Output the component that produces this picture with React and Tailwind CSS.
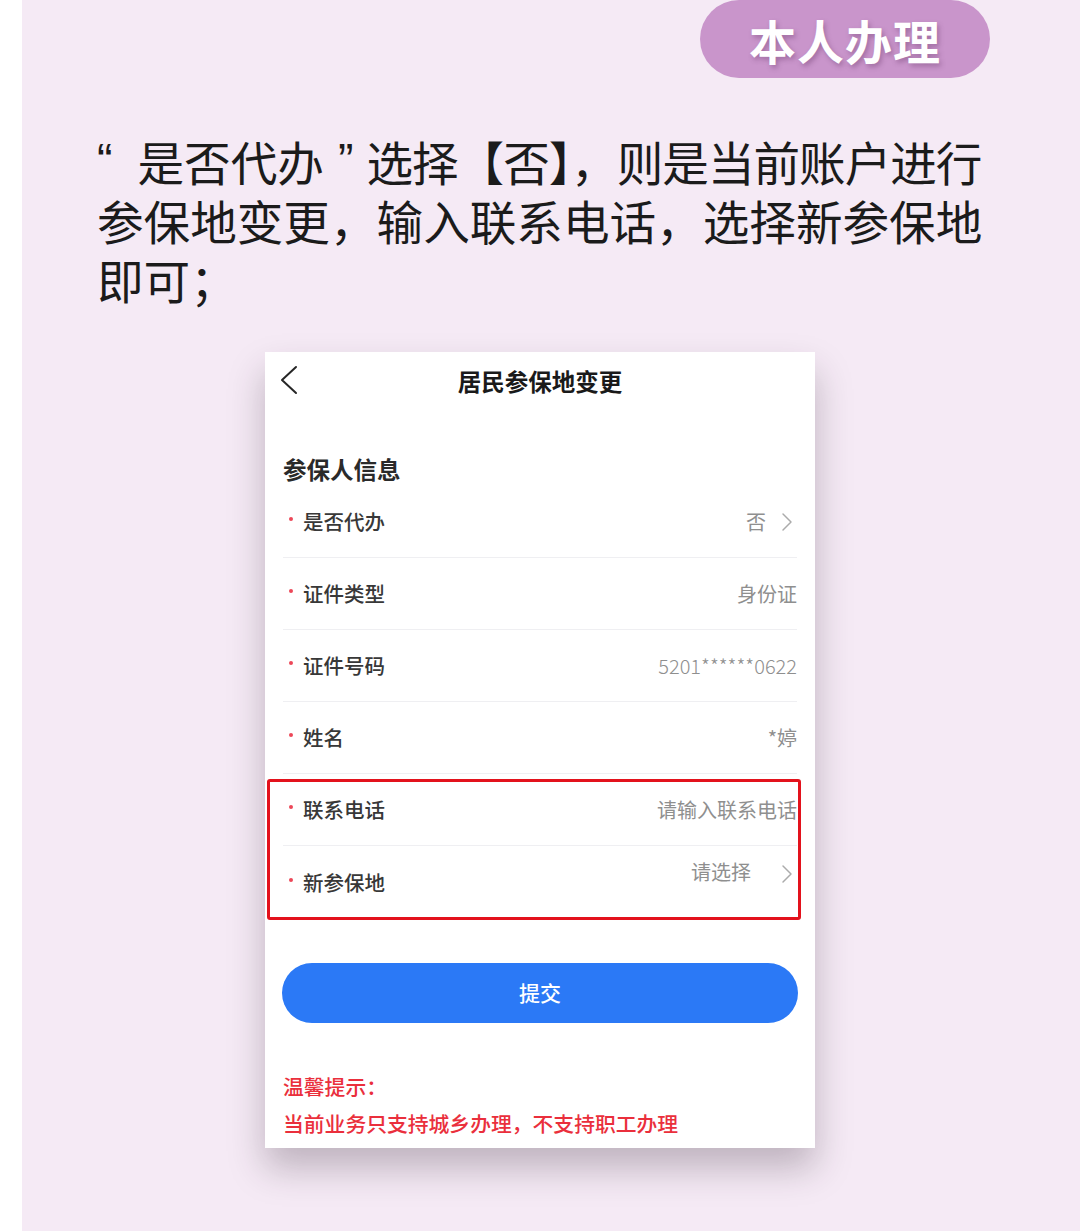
import { ChevronRight } from 'lucide-react';

const font = { fontFamily: '"Noto Sans CJK SC", "Noto Sans", sans-serif' };
const latin = { fontFamily: '"Liberation Sans", "Noto Sans CJK SC", sans-serif' };

function Row({ label, value, chevron, last, valueClass = '', chevronGap = 'ml-[5px]' }) {
  return (
    <div
      className={`flex items-center justify-between h-[72px] ${
        last ? '' : 'border-b border-[#efeff2]'
      }`}
    >
      <div className="flex items-center">
        <span className="w-[4px] h-[4px] rounded-full bg-[#ec4758] ml-[6px] mr-[10px] -mt-[5px]" />
        <span className="text-[20.5px] font-medium text-[#383838]">{label}</span>
      </div>
      <div className={`flex items-center text-[20px] text-[#8f8f8f] ${valueClass}`}>
        <span>{value}</span>
        {chevron && (
          <ChevronRight
            size={32}
            strokeWidth={1.1}
            className={`text-[#ababab] -mr-[6px] ${chevronGap}`}
          />
        )}
      </div>
    </div>
  );
}

export default function App() {
  return (
    <div className="w-[1080px] h-[1231px] flex bg-white overflow-hidden" style={font}>
      <div className="w-[22px] shrink-0 bg-white" />
      <main className="flex-1 bg-[#f5eaf5] flex flex-col">
        {/* Badge */}
        <div className="flex justify-end pr-[90px]">
          <div className="w-[290px] h-[78px] rounded-full bg-[#c995cb] flex items-center justify-center">
            <span
              className="text-white text-[47px] font-bold tracking-[1px] leading-none"
              style={{ textShadow: '2px 3px 5px rgba(90,40,90,0.35)' }}
            >
              本人办理
            </span>
          </div>
        </div>

        {/* Description */}
        <div className="mt-[53px] ml-[75px] text-[46.6px] text-[#1b1b1b] whitespace-nowrap">
          <div className="h-[59px] leading-[59px] flex items-center">
            <span style={latin}>“</span>
            <span className="ml-[25px]">是否代办</span>
            <span style={latin} className="ml-[14px]">”</span>
            <span className="ml-[13px] tracking-[-1px]">选择【否】，则是当前账户进行</span>
          </div>
          <div className="h-[59px] leading-[59px]">参保地变更，输入联系电话，选择新参保地</div>
          <div className="h-[59px] leading-[59px]">即可；</div>
        </div>

        {/* Phone screenshot */}
        <section className="mt-[44px] ml-[243px] w-[550px] bg-white relative shadow-[0_20px_34px_rgba(50,35,50,0.28)]">
          <header className="h-[58px] relative flex items-center justify-center">
            <svg
              width="20"
              height="30"
              viewBox="0 0 20 30"
              className="absolute left-[14px] top-[13px]"
              fill="none"
              stroke="#262626"
              strokeWidth="2"
              strokeLinecap="round"
              strokeLinejoin="round"
            >
              <polyline points="17,2 3,15 17,28" />
            </svg>
            <h1 className="text-[23.5px] font-bold text-[#1a1a1a] mt-[2px]">居民参保地变更</h1>
          </header>

          <div className="px-[18px]">
            <h2 className="mt-[42px] h-[34px] text-[23.5px] font-bold text-[#2a2a2a] leading-[34px]">
              参保人信息
            </h2>
            <div>
              <Row label="是否代办" value="否" chevron chevronGap="ml-[5px]" />
              <Row label="证件类型" value="身份证" />
              <Row label="证件号码" value="5201******0622" valueClass="font-light" />
              <Row label="姓名" value="*婷" />
              <Row label="联系电话" value="请输入联系电话" />
              <Row
                label="新参保地"
                value="请选择"
                chevron
                last
                chevronGap="ml-[20px] mt-[4px]"
                valueClass="-mt-[20px]"
              />
            </div>

            <button className="mt-[45px] w-[516px] -ml-[1px] h-[60px] rounded-full bg-[#2b79f6] text-white text-[21px] font-medium">
              提交
            </button>

            <div className="mt-[48px] pb-[10px] text-[#ea2f3c] text-[20.8px] font-medium">
              <p className="leading-[30px]">温馨提示：</p>
              <p className="leading-[30px] mt-[7px]">当前业务只支持城乡办理，不支持职工办理</p>
            </div>
          </div>

          {/* highlight annotation */}
          <div className="absolute left-[2px] top-[427px] w-[534px] h-[141px] border-[3px] border-[#e3121c] rounded-[3px] pointer-events-none" />
        </section>
      </main>
    </div>
  );
}
